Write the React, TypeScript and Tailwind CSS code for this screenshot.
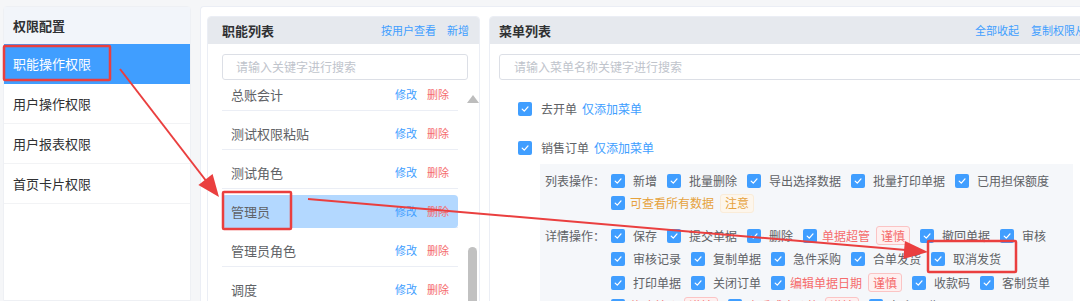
import clsx from "clsx";

type Opt = { label: string; tone?: "red" | "orange"; tag?: "warn" | "danger"; tagText?: string };

const SIDE_ITEMS = ["职能操作权限", "用户操作权限", "用户报表权限", "首页卡片权限"];
const ROLES = ["总账会计", "测试权限粘贴", "测试角色", "管理员", "管理员角色", "调度"];

// 列表操作
const LIST_ROWS: Opt[][] = [
  [{ label: "新增" }, { label: "批量删除" }, { label: "导出选择数据" }, { label: "批量打印单据" }, { label: "已用担保额度" }],
  [{ label: "可查看所有数据", tone: "orange", tag: "warn", tagText: "注意" }],
];

// 详情操作
const DETAIL_ROWS: Opt[][] = [
  [
    { label: "保存" },
    { label: "提交单据" },
    { label: "删除" },
    { label: "单据超管", tone: "red", tag: "danger", tagText: "谨慎" },
    { label: "撤回单据" },
    { label: "审核" },
  ],
  [{ label: "审核记录" }, { label: "复制单据" }, { label: "急件采购" }, { label: "合单发货" }, { label: "取消发货" }],
  [
    { label: "打印单据" },
    { label: "关闭订单" },
    { label: "编辑单据日期", tone: "red", tag: "danger", tagText: "谨慎" },
    { label: "收款码" },
    { label: "客制货单" },
  ],
  [
    { label: "修改单价", tone: "red", tag: "danger", tagText: "谨慎" },
    { label: "查看成本价格", tone: "red", tag: "danger", tagText: "谨慎" },
    { label: "打印预览" },
  ],
];

function Check() {
  return (
    <span className="inline-flex h-[14px] w-[14px] shrink-0 items-center justify-center rounded-[2px] bg-[#409eff]">
      <svg width="10" height="10" viewBox="0 0 10 10">
        <path d="M2.2 5.1 L4.3 7.1 L8 2.9" fill="none" stroke="#fff" strokeWidth="1.3" strokeLinecap="round" strokeLinejoin="round" />
      </svg>
    </span>
  );
}

function Option({ opt }: { opt: Opt }) {
  return (
    <div className="mr-[10px] flex shrink-0 items-center">
      <Check />
      <span
        className={clsx(
          "whitespace-nowrap",
          opt.tag ? "ml-[5px]" : "ml-[8px]",
          opt.tone === "red" ? "text-[#f56c6c]" : opt.tone === "orange" ? "text-[#e6a23c]" : "text-[#606266]"
        )}
      >
        {opt.label}
      </span>
      {opt.tag && (
        <span
          className={clsx(
            "ml-[6px] flex h-[19px] items-center rounded-[3px] border px-[4px] text-[12px] leading-none",
            opt.tag === "danger"
              ? "border-[#fbc4c4] bg-[#fef0f0] text-[#f56c6c]"
              : "border-[#faecd8] bg-[#fdf6ec] text-[#e6a23c]"
          )}
        >
          {opt.tagText}
        </span>
      )}
    </div>
  );
}

export default function App() {
  return (
    <div className="relative flex h-[301px] w-[1080px] items-start overflow-hidden bg-[#f5f6f8] font-['Noto_Sans_CJK_SC',sans-serif] text-[12px]">
      {/* ── 权限配置 侧栏 ── */}
      <aside className="ml-[3px] mt-[6px] h-[295px] w-[188px] shrink-0 rounded-t-[4px] border border-[#eef0f4] bg-white">
        <div className="flex h-[37px] items-center bg-[#f2f5fa] pl-[9px] text-[13px] font-bold text-[#303133]">权限配置</div>
        {SIDE_ITEMS.map((t, i) => (
          <div
            key={t}
            className={clsx(
              "flex h-[40px] items-center border-b pl-[9px] text-[13px]",
              i === 0 ? "border-[#409eff] bg-[#409eff] text-white" : "border-[#f2f3f5] text-[#303133]"
            )}
          >
            {t}
          </div>
        ))}
      </aside>

      {/* ── 主区域 ── */}
      <main className="ml-[9px] mt-[6px] flex h-[295px] flex-1 gap-[9px] overflow-hidden rounded-tl-[4px] border-l border-t border-[#ebeef5] bg-white pl-[6px] pt-[9px]">
        {/* 职能列表 */}
        <section className="h-[290px] w-[273px] shrink-0 overflow-hidden rounded-t-[4px] border border-[#ebeef5]">
          <div className="flex h-[27px] items-center bg-[#e6e9ee] pl-[14px] pr-[10px]">
            <span className="text-[13px] font-bold text-[#303133]">职能列表</span>
            <span className="ml-auto text-[11px] text-[#409eff]">按用户查看</span>
            <span className="ml-[11px] text-[11px] text-[#409eff]">新增</span>
          </div>
          <div className="pl-[14px]">
            <div className="mt-[10px] flex h-[26px] w-[246px] items-center rounded-[3px] border border-[#dcdfe6] pl-[13px] text-[12px] text-[#c0c4cc]">
              请输入关键字进行搜索
            </div>
            <div className="flex">
              <div className="mt-[9px] h-[220px] w-[236px] overflow-hidden">
                <div className="-mt-[17px]">
                  {ROLES.map((r) => (
                    <div key={r} className="h-[39px] border-b border-[#ebeef5] pt-[6px]">
                      <div
                        className={clsx(
                          "flex h-[33px] items-center rounded-[4px] px-[9px] text-[13px]",
                          r === "管理员" && "bg-[#b3d8ff]"
                        )}
                      >
                        <span className="text-[#606266]">{r}</span>
                        <span className="ml-auto text-[11px] text-[#409eff]">修改</span>
                        <span className="ml-[10px] text-[11px] text-[#f56c6c]">删除</span>
                      </div>
                    </div>
                  ))}
                </div>
              </div>
              {/* 滚动条 */}
              <div className="ml-[8px] flex w-[13px] flex-col items-center">
                <div className="mt-[15px] h-0 w-0 border-x-[6px] border-b-[8px] border-x-transparent border-b-[#bdbdbd]" />
                <div className="mt-[144px] h-[70px] w-[9px] rounded-full bg-[#c1c1c1]" />
              </div>
            </div>
          </div>
        </section>

        {/* 菜单列表 */}
        <section className="h-[290px] w-[608px] shrink-0 overflow-hidden rounded-t-[4px] border border-[#ebeef5]">
          <div className="flex h-[27px] items-center bg-[#e6e9ee] pl-[9px] pr-[10px]">
            <span className="text-[13px] font-bold text-[#303133]">菜单列表</span>
            <span className="ml-auto text-[11px] text-[#409eff]">全部收起</span>
            <span className="ml-[12px] text-[11px] text-[#409eff]">复制权限从</span>
          </div>
          <div className="mt-[10px] ml-[9px] flex h-[26px] w-[600px] items-center rounded-[3px] border border-[#dcdfe6] pl-[14px] text-[12px] text-[#c0c4cc]">
            请输入菜单名称关键字进行搜索
          </div>

          <div className="mt-[18px] flex h-[22px] items-center pl-[28px]">
            <Check />
            <span className="ml-[9px] text-[#606266]">去开单</span>
            <span className="ml-[5px] text-[#409eff]">仅添加菜单</span>
          </div>
          <div className="mt-[17px] flex h-[22px] items-center pl-[28px]">
            <Check />
            <span className="ml-[9px] text-[#606266]">销售订单</span>
            <span className="ml-[5px] text-[#409eff]">仅添加菜单</span>
          </div>

          <div className="ml-[50px] mt-[5px] w-[533px] bg-[#f5f7fa] pl-[5px] pt-[6px]">
            <div className="flex">
              <div className="flex h-[22px] w-[66px] shrink-0 items-center text-[#606266]">列表操作：</div>
              <div>
                {LIST_ROWS.map((row, i) => (
                  <div key={i} className="flex h-[22px] items-center">
                    {row.map((o) => (
                      <Option key={o.label} opt={o} />
                    ))}
                  </div>
                ))}
              </div>
            </div>
            <div className="mt-[10px] flex">
              <div className="flex h-[23.5px] w-[66px] shrink-0 items-center text-[#606266]">详情操作：</div>
              <div>
                {DETAIL_ROWS.map((row, i) => (
                  <div key={i} className="flex h-[23.5px] items-center">
                    {row.map((o) => (
                      <Option key={o.label} opt={o} />
                    ))}
                  </div>
                ))}
              </div>
            </div>
          </div>
        </section>
      </main>

      {/* ── 标注：红框与箭头 ── */}
      <svg className="pointer-events-none absolute inset-0" width="1080" height="301" viewBox="0 0 1080 301">
        <g fill="none" stroke="#ea3f3f" strokeWidth="2.5">
          <rect x="4" y="46" width="106" height="34" rx="1" />
          <rect x="223" y="192" width="68" height="37" rx="1" />
          <rect x="928" y="241" width="88" height="31" rx="1" />
        </g>
        <g stroke="#ea3f3f" strokeWidth="2" fill="#ea3f3f">
          <line x1="120" y1="69" x2="207" y2="182" />
          <polygon points="219,197 198.4,185.1 212.6,174.1" stroke="none" />
          <line x1="308" y1="199" x2="906" y2="250" />
          <polygon points="928,252 903.3,259 904.9,241" stroke="none" />
        </g>
      </svg>
    </div>
  );
}
